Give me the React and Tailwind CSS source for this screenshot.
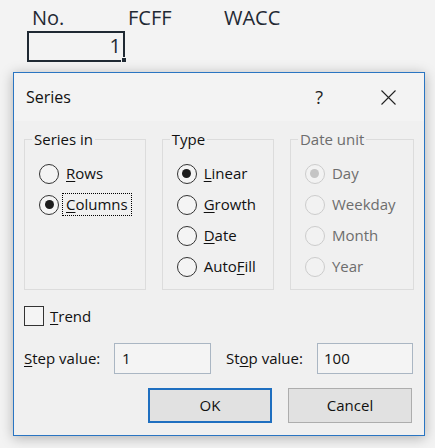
import { useState } from 'react'

const font = { fontFamily: '"Open Sans", "Noto Sans", "Liberation Sans", sans-serif' }

function Radio({ checked, disabled, children, focused }) {
    return (
        <div className="h-[31px] flex items-center">
            <span className={`w-[20px] h-[20px] rounded-full border flex items-center justify-center shrink-0 ${disabled ? 'border-[#cccccc] bg-[#f2f2f2]' : 'border-[#333333] bg-[#f4f4f4]'}`}>
                {checked && <span className={`w-[9px] h-[9px] rounded-full ${disabled ? 'bg-[#c4c4c4]' : 'bg-[#1c1c1c]'}`} />}
            </span>
            <span className={`ml-[4px] px-[3px] leading-[21px] ${focused ? 'outline outline-1 outline-dotted outline-black' : ''} ${disabled ? 'text-[#6d6d6d]' : 'text-[#111]'}`}>
                {children}
            </span>
        </div>
    )
}

function Group({ title, width, disabled, children }) {
    return (
        <fieldset className={`border border-[#dcdcdc] h-[161px] px-[14px] text-left ${width}`}>
            <legend className={`ml-[-7px] mr-auto px-[2px] leading-[20px] ${disabled ? 'text-[#6d6d6d]' : 'text-[#111]'}`}>{title}</legend>
            <div className="pt-[9px]">{children}</div>
        </fieldset>
    )
}

export default function App() {
    const [step] = useState('1')
    const [stop] = useState('100')

    return (
        <div className="w-[435px] h-[448px] bg-[#f3f3f3] overflow-hidden" style={font}>
            <div className="flex pl-[32px] pt-[4px] text-[20px] leading-[28px] text-[#1f2933]">
                <span className="w-[96px]">No.</span>
                <span className="w-[96px]">FCFF</span>
                <span>WACC</span>
            </div>

            <div className="relative ml-[27px] mt-[-1px] w-[98px] h-[31px] border-2 border-[#1f2933] text-right pr-[2px] text-[20px] leading-[26px] text-[#1f2933]">
                1
                <span className="absolute right-[-4px] bottom-[-3px] w-[6px] h-[6px] bg-[#1f2933] border border-[#f3f3f3]" />
            </div>

            <div className="ml-[13px] mt-[10px] w-[412px] h-[364px] border border-[#2a75c2] bg-[#f0f0f0] shadow-[0_2px_12px_rgba(0,0,0,0.28)] text-[15px]">
                <div className="h-[48px] bg-[#f3f3f3] flex items-center pl-[12px] pr-[28px]">
                    <span className="text-[16px] text-[#111] flex-1">Series</span>
                    <span className="text-[18px] text-[#222] mr-[58px]">?</span>
                    <svg width="15" height="15" viewBox="0 0 15 15">
                        <path d="M0.5 0.5 L14.5 14.5 M14.5 0.5 L0.5 14.5" stroke="#222" strokeWidth="1.1" fill="none" />
                    </svg>
                </div>

                <div className="pl-[10px] pr-[11px] pt-[8px]">
                    <div className="flex gap-[16px]">
                        <Group title="Series in" width="w-[121px]">
                            <Radio><u className="underline-offset-2">R</u>ows</Radio>
                            <Radio checked focused><u className="underline-offset-2">C</u>olumns</Radio>
                        </Group>
                        <Group title="Type" width="w-[112px]">
                            <Radio checked><u className="underline-offset-2">L</u>inear</Radio>
                            <Radio><u className="underline-offset-2">G</u>rowth</Radio>
                            <Radio><u className="underline-offset-2">D</u>ate</Radio>
                            <Radio>Auto<u className="underline-offset-2">F</u>ill</Radio>
                        </Group>
                        <Group title="Date unit" width="w-[124px]" disabled>
                            <Radio checked disabled>Day</Radio>
                            <Radio disabled>Weekday</Radio>
                            <Radio disabled>Month</Radio>
                            <Radio disabled>Year</Radio>
                        </Group>
                    </div>

                    <div className="mt-[16px] flex items-center h-[20px]">
                        <span className="w-[20px] h-[20px] border border-[#333333] bg-[#f4f4f4]" />
                        <span className="ml-[6px] text-[#111]"><u className="underline-offset-2">T</u>rend</span>
                    </div>

                    <div className="mt-[17px] flex items-center text-[#111]">
                        <span className="w-[90px]"><u className="underline-offset-2">S</u>tep value:</span>
                        <div className="w-[97px] h-[31px] border border-[#aab6c3] bg-[#f4f4f4] pl-[7px] leading-[28px]">{step}</div>
                        <span className="ml-[15px] w-[91px]">St<u className="underline-offset-2">o</u>p value:</span>
                        <div className="w-[96px] h-[31px] border border-[#aab6c3] bg-[#f4f4f4] pl-[6px] leading-[28px]">{stop}</div>
                    </div>

                    <div className="mt-[14px] flex justify-end gap-[16px] pr-[1px] text-[#111]">
                        <button className="w-[124px] h-[35px] border-2 border-[#1f6fc0] bg-[#e1e1e1]">OK</button>
                        <button className="w-[124px] h-[35px] border border-[#adadad] bg-[#e1e1e1]">Cancel</button>
                    </div>
                </div>
            </div>
        </div>
    )
}
